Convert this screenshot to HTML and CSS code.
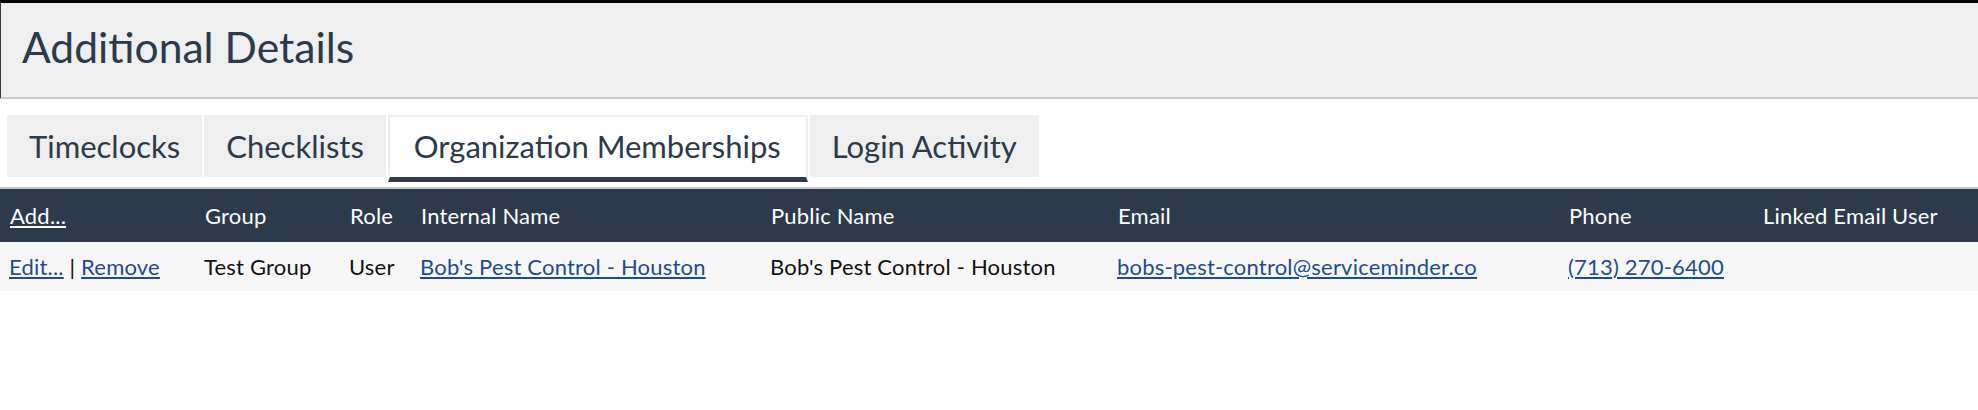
FILE: index.html
```html
<!DOCTYPE html>
<html>
<head>
<meta charset="utf-8">
<link rel="stylesheet" href="styles.css">
</head>
<body>
  <div class="panel-head">
    <h1 class="panel-title">Additional Details</h1>
  </div>
  <div class="tabs">
    <div class="tab">Timeclocks</div>
    <div class="tab">Checklists</div>
    <div class="tab active">Organization Memberships</div>
    <div class="tab">Login Activity</div>
  </div>
  <table class="grid">
    <colgroup>
      <col class="c-actions">
      <col class="c-group">
      <col class="c-role">
      <col class="c-internal">
      <col class="c-public">
      <col class="c-email">
      <col class="c-phone">
      <col class="c-linked">
    </colgroup>
    <thead>
      <tr>
        <th><a href="#" class="head-link">Add...</a></th>
        <th>Group</th>
        <th>Role</th>
        <th>Internal Name</th>
        <th>Public Name</th>
        <th>Email</th>
        <th>Phone</th>
        <th>Linked Email User</th>
      </tr>
    </thead>
    <tbody>
      <tr>
        <td><a href="#">Edit...</a> | <a href="#">Remove</a></td>
        <td>Test Group</td>
        <td>User</td>
        <td><a href="#">Bob's Pest Control - Houston</a></td>
        <td>Bob's Pest Control - Houston</td>
        <td><a href="#">bobs-pest-control@serviceminder.co</a></td>
        <td><a href="#">(713) 270-6400</a></td>
        <td></td>
      </tr>
    </tbody>
  </table>
</body>
</html>
```
FILE: styles.css
```css
* { box-sizing: border-box; }
body {
  margin: 0;
  background: #fff;
  font-family: Lato, "Open Sans", sans-serif;
  color: #2c3a4b;
}
.panel-head {
  height: 99px;
  background: #efefef;
  border-top: 3px solid #000;
  border-left: 1px solid #2c3a4b;
  border-bottom: 2px solid #cacaca;
  padding: 19px 0 0 21px;
}
.panel-title {
  margin: 0;
  font-size: 42.6px;
  font-weight: 400;
  line-height: 50px;
  color: #2c3a4b;
}
.tabs {
  display: flex;
  align-items: flex-start;
  gap: 2px;
  margin: 16px 0 0 7px;
}
.tab {
  height: 62px;
  line-height: 62px;
  padding: 0 22px;
  font-size: 31px;
  background: #efefef;
  color: #2c3a4b;
}
.tab.active {
  height: 67px;
  line-height: 58px;
  padding: 0 25px 0 24px;
  background: #fff;
  border: 2px solid #efefef;
  border-bottom: 5px solid #2c3a4b;
}
.grid {
  margin-top: 5px;
  width: 100%;
  border-collapse: collapse;
  table-layout: fixed;
  border-top: 2px solid #c8c8c8;
  font-size: 22px;
  letter-spacing: 0.2px;
}
.c-actions { width: 195px; }
.c-group { width: 145px; }
.c-role { width: 71px; }
.c-internal { width: 350px; }
.c-public { width: 347px; }
.c-email { width: 451px; }
.c-phone { width: 194px; }
.c-linked { width: auto; }
.grid th {
  background: #2c3a4b;
  color: #fff;
  font-weight: 400;
  text-align: left;
  height: 53px;
  line-height: 53px;
  padding: 0 0 0 10px;
  white-space: nowrap;
}
.grid td {
  background: #f7f7f7;
  color: #111;
  height: 49px;
  line-height: 49px;
  padding: 0 0 0 9px;
  white-space: nowrap;
}
.grid a { color: #1f4b94; }
.grid .head-link { color: #fff; }
```
